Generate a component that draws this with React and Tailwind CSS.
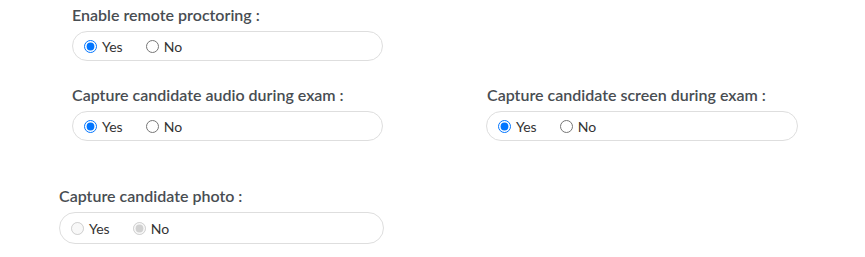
import React from 'react';

const RadioGroup = ({ name, value, disabled, width }) => (
  <div
    className={`${width} h-[30px] border border-[#dedede] rounded-full flex items-center pl-[11px] text-[14px] text-[#333]`}
  >
    <label className="flex items-center">
      <input
        type="radio"
        name={name}
        defaultChecked={value === 'yes'}
        disabled={disabled}
        className="w-[13px] h-[13px] m-0"
      />
      <span className="ml-[5px]">Yes</span>
    </label>
    <label className="flex items-center ml-[23px]">
      <input
        type="radio"
        name={name}
        defaultChecked={value === 'no'}
        disabled={disabled}
        className="w-[13px] h-[13px] m-0"
      />
      <span className="ml-[5px]">No</span>
    </label>
  </div>
);

const Field = ({ label, children, className = '' }) => (
  <div className={className}>
    <div className="text-[16px] leading-[20px] font-semibold text-[#484d52] mb-[6px]">{label}</div>
    {children}
  </div>
);

export default function App() {
  return (
    <div
      className="w-[865px] h-[257px] bg-white overflow-hidden"
      style={{ fontFamily: 'Lato, "Noto Sans", sans-serif' }}
    >
      <div className="pt-[5px] pl-[72px]">
        <Field label="Enable remote proctoring :">
          <RadioGroup name="remote" value="yes" width="w-[311px]" />
        </Field>
      </div>

      <div className="flex pt-[24px] pl-[72px]">
        <Field label="Capture candidate audio during exam :" className="w-[414px]">
          <RadioGroup name="audio" value="yes" width="w-[311px]" />
        </Field>
        <Field label="Capture candidate screen during exam :" className="pl-px">
          <RadioGroup name="screen" value="yes" width="w-[312px] -ml-px" />
        </Field>
      </div>

      <div className="pt-[45px] pl-[59px]">
        <Field label="Capture candidate photo :">
          <RadioGroup name="photo" value="no" disabled width="w-[325px] h-[32px]" />
        </Field>
      </div>
    </div>
  );
}
